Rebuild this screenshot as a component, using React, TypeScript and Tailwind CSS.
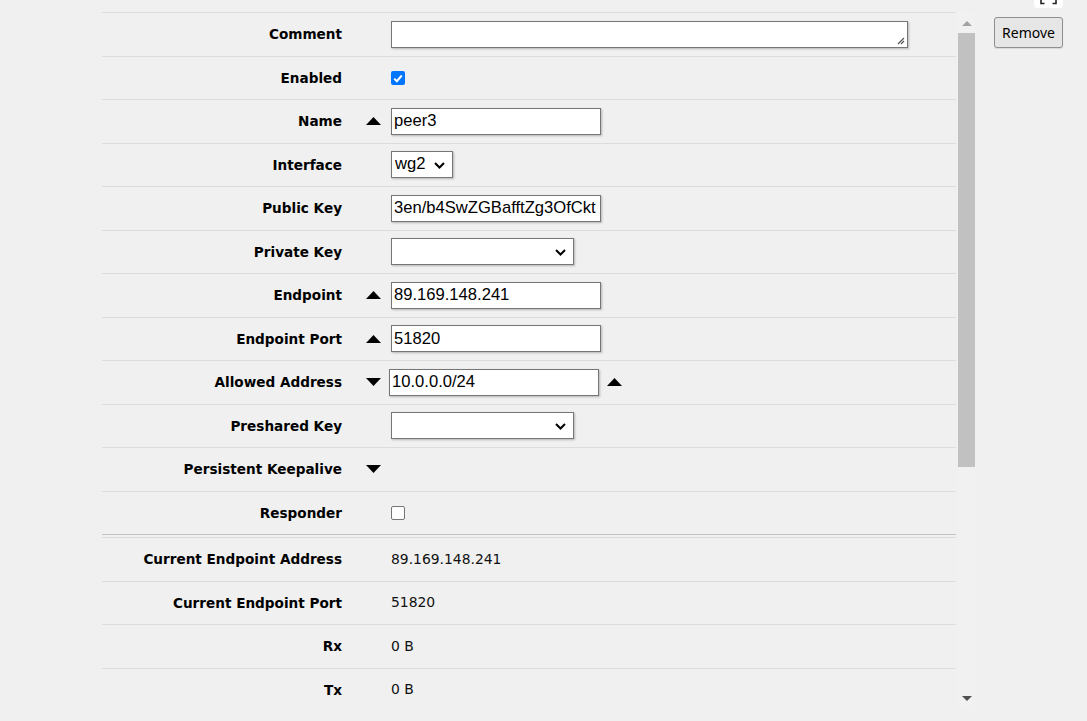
import React from "react";

const label = "font-['DejaVu_Sans',Verdana,sans-serif] font-bold text-[13.6px] text-black";
const value = "font-['DejaVu_Sans',Verdana,sans-serif] text-[13.9px] text-[#111]";
const field =
  "h-[27px] bg-white border border-[#767676] shadow-[1px_1px_2px_rgba(0,0,0,0.25)] px-[2px] font-['Liberation_Sans',Arial,sans-serif] text-[16.6px] text-black outline-none";

function Up() {
  return (
    <svg width="15" height="8" viewBox="0 0 15 8">
      <polygon points="7.5,0 15,8 0,8" fill="#000" />
    </svg>
  );
}

function Down() {
  return (
    <svg width="15" height="8" viewBox="0 0 15 8">
      <polygon points="0,0 15,0 7.5,8" fill="#000" />
    </svg>
  );
}

function Chevron() {
  return (
    <svg width="11" height="7" viewBox="0 0 11 7" className="absolute right-[7px] top-[10px]">
      <path d="M1 1l4.5 4.5L10 1" stroke="#000" strokeWidth="2" fill="none" />
    </svg>
  );
}

function Row({
  name,
  arrow,
  children,
}: {
  name: string;
  arrow?: "up" | "down";
  children?: React.ReactNode;
}) {
  return (
    <div className="h-[43.5px] border-t border-[#dcdcdc] flex items-center">
      <div className={`w-[240px] text-right ${label}`}>{name}</div>
      <div className="w-[49px] pl-[24px] flex items-center">
        {arrow === "up" && <Up />}
        {arrow === "down" && <Down />}
      </div>
      <div className="flex items-center">{children}</div>
    </div>
  );
}

function Select({ width, text }: { width: string; text?: string }) {
  return (
    <div className={`relative ${field} ${width} flex items-center`}>
      <span className="pl-[1px]">{text}</span>
      <Chevron />
    </div>
  );
}

export default function App() {
  return (
    <div className="h-screen overflow-hidden bg-[#f0f0f0] flex">
      <div className="w-[102px] shrink-0" />

      <div className="w-[854px] shrink-0 pt-[12px]">
        <Row name="Comment">
          <div className={`${field} w-[517px] h-[26px] relative`}>
            <svg width="10" height="10" viewBox="0 0 10 10" className="absolute right-[2px] bottom-[2px]">
              <path d="M9 3L3 9M9 6L6 9" stroke="#555" strokeWidth="1.2" />
            </svg>
          </div>
        </Row>
        <Row name="Enabled">
          <div className="w-[14px] h-[14px] rounded-[2px] bg-[#0075ff] flex items-center justify-center mt-[1px]">
            <svg width="10" height="9" viewBox="0 0 10 9">
              <path d="M1.2 4.6l2.6 2.6L8.8 1.5" stroke="#fff" strokeWidth="2" fill="none" />
            </svg>
          </div>
        </Row>
        <Row name="Name" arrow="up">
          <input className={`${field} w-[210px]`} defaultValue="peer3" />
        </Row>
        <Row name="Interface">
          <Select width="w-[62px]" text="wg2" />
        </Row>
        <Row name="Public Key">
          <input className={`${field} w-[210px]`} defaultValue="3en/b4SwZGBafftZg3OfCkt" />
        </Row>
        <Row name="Private Key">
          <Select width="w-[183px]" />
        </Row>
        <Row name="Endpoint" arrow="up">
          <input className={`${field} w-[210px]`} defaultValue="89.169.148.241" />
        </Row>
        <Row name="Endpoint Port" arrow="up">
          <input className={`${field} w-[210px]`} defaultValue="51820" />
        </Row>
        <Row name="Allowed Address" arrow="down">
          <input className={`${field} w-[210px] -ml-[2px]`} defaultValue="10.0.0.0/24" />
          <div className="ml-[8px] flex items-center">
            <Up />
          </div>
        </Row>
        <Row name="Preshared Key">
          <Select width="w-[183px]" />
        </Row>
        <Row name="Persistent Keepalive" arrow="down" />
        <Row name="Responder">
          <div className="w-[14px] h-[14px] rounded-[2px] bg-white border border-[#767676] mt-[1px]" />
        </Row>

        <div className="h-[3px] border-t border-[#c4c4c4]" />

        <Row name="Current Endpoint Address">
          <span className={value}>89.169.148.241</span>
        </Row>
        <Row name="Current Endpoint Port">
          <span className={value}>51820</span>
        </Row>
        <Row name="Rx">
          <span className={value}>0 B</span>
        </Row>
        <Row name="Tx">
          <span className={value}>0 B</span>
        </Row>
      </div>

      <div className="w-[2px] shrink-0" />

      <div className="w-[17px] shrink-0 mt-[12px] h-[697px] bg-[#f1f1f1] flex flex-col items-center">
        <div className="h-[21px] w-full flex items-center justify-center pt-[2px]">
          <svg width="10" height="5" viewBox="0 0 10 5">
            <polygon points="5,0 10,5 0,5" fill="#a3a3a3" />
          </svg>
        </div>
        <div className="w-full h-[434px] bg-[#c1c1c1]" />
        <div className="flex-1" />
        <div className="h-[17px] w-full flex items-center justify-center pb-[4px]">
          <svg width="10" height="5" viewBox="0 0 10 5">
            <polygon points="0,0 10,0 5,5" fill="#505050" />
          </svg>
        </div>
      </div>

      <div className="flex flex-col">
        <div className="ml-[59px] w-[29px] h-[8px] bg-white rounded-b-[3px] flex justify-center">
          <svg width="17" height="5" viewBox="0 0 17 5">
            <path d="M1 0v3.5h3.5M16 0v3.5h-3.5" stroke="#222" strokeWidth="1.6" fill="none" />
          </svg>
        </div>
        <button className="ml-[19px] mt-[9px] w-[69px] h-[31px] bg-[#e6e6e6] border border-[#8f8f8f] rounded-[3px] shadow-[0_1px_1px_rgba(0,0,0,0.1)] font-['Noto_Sans',sans-serif] text-[14px] text-black">
          Remove
        </button>
      </div>
    </div>
  );
}
